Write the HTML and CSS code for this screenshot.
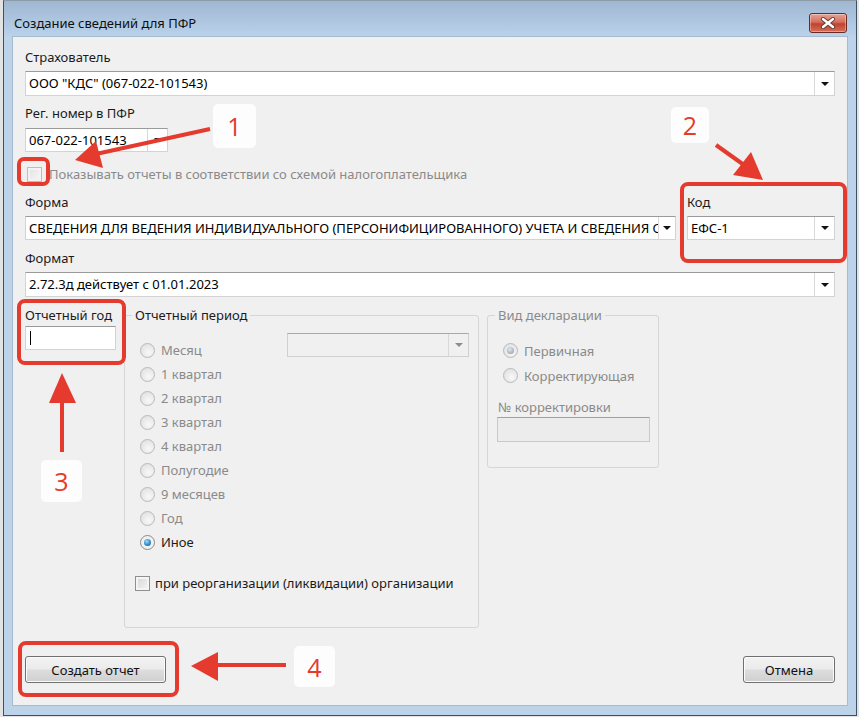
FILE: index.html
```html
<!DOCTYPE html>
<html lang="ru">
<head>
    <meta charset="UTF-8">
    <meta name="viewport" content="width=device-width, initial-scale=1.0">
    <title>Создание сведений для ПФР</title>
    <link rel="stylesheet" href="styles.css">
</head>
<body>

<div class="screen">
    <div class="window">
        <!-- Title bar -->
        <div class="titlebar">
            <span class="title">Создание сведений для ПФР</span>
            <button class="close-btn">
                <svg width="16" height="12" viewBox="0 0 16 12">
                    <path d="M3 2 L13 10 M13 2 L3 10" stroke="#6b3a33" stroke-width="4.2" stroke-linecap="round"/>
                    <path d="M3 2 L13 10 M13 2 L3 10" stroke="#ffffff" stroke-width="2.4" stroke-linecap="round"/>
                </svg>
            </button>
        </div>

        <div class="client">
            <label class="lbl">Страхователь</label>
            <div class="combo combo-insurer">
                <span class="combo-text">ООО "КДС" (067-022-101543)</span>
                <span class="combo-btn"></span>
            </div>

            <label class="lbl lbl-reg">Рег. номер в ПФР</label>
            <div class="combo combo-reg">
                <span class="combo-text">067-022-101543</span>
                <span class="combo-btn"></span>
            </div>

            <div class="check-row check-scheme disabled">
                <span class="checkbox"></span>
                <span>Показывать отчеты в соответствии со схемой налогоплательщика</span>
            </div>

            <div class="form-row">
                <div class="col-form">
                    <label class="lbl">Форма</label>
                    <div class="combo combo-form">
                        <span class="combo-text">СВЕДЕНИЯ ДЛЯ ВЕДЕНИЯ ИНДИВИДУАЛЬНОГО (ПЕРСОНИФИЦИРОВАННОГО) УЧЕТА И СВЕДЕНИЯ О</span>
                        <span class="combo-btn narrow"></span>
                    </div>
                </div>
                <div class="col-code">
                    <label class="lbl">Код</label>
                    <div class="combo combo-form">
                        <span class="combo-text">ЕФС-1</span>
                        <span class="combo-btn"></span>
                    </div>
                </div>
            </div>

            <label class="lbl lbl-format">Формат</label>
            <div class="combo combo-format">
                <span class="combo-text">2.72.3д действует с 01.01.2023</span>
                <span class="combo-btn"></span>
            </div>

            <div class="lower">
                <div class="year">
                    <label class="lbl">Отчетный год</label>
                    <div class="textbox"><span class="caret"></span></div>
                </div>

                <fieldset class="group period">
                    <legend>Отчетный период</legend>
                    <div class="period-top">
                        <div class="radios">
                            <div class="radio-row disabled"><span class="radio"></span>Месяц</div>
                            <div class="radio-row disabled"><span class="radio"></span>1 квартал</div>
                            <div class="radio-row disabled"><span class="radio"></span>2 квартал</div>
                            <div class="radio-row disabled"><span class="radio"></span>3 квартал</div>
                            <div class="radio-row disabled"><span class="radio"></span>4 квартал</div>
                            <div class="radio-row disabled"><span class="radio"></span>Полугодие</div>
                            <div class="radio-row disabled"><span class="radio"></span>9 месяцев</div>
                            <div class="radio-row disabled"><span class="radio"></span>Год</div>
                            <div class="radio-row"><span class="radio checked"></span>Иное</div>
                        </div>
                        <div class="combo combo-month disabled">
                            <span class="combo-text"></span>
                            <span class="combo-btn"></span>
                        </div>
                    </div>
                    <div class="check-row check-reorg">
                        <span class="checkbox enabled"></span>
                        <span>при реорганизации (ликвидации) организации</span>
                    </div>
                </fieldset>

                <fieldset class="group decl disabled">
                    <legend>Вид декларации</legend>
                    <div class="decl-radios">
                        <div class="radio-row"><span class="radio checked-gray"></span>Первичная</div>
                        <div class="radio-row"><span class="radio"></span>Корректирующая</div>
                    </div>
                    <label class="lbl lbl-corr">№ корректировки</label>
                    <div class="textbox textbox-corr"></div>
                </fieldset>
            </div>

            <div class="buttons">
                <button class="btn btn-create">Создать отчет</button>
                <button class="btn btn-cancel">Отмена</button>
            </div>
        </div>
    </div>

    <!-- Annotations over the screenshot -->
    <svg class="marks" width="859" height="717" viewBox="0 0 859 717">
        <g fill="none" stroke="#e53a2e" stroke-width="4">
            <rect x="19" y="159" width="29" height="25" rx="5"/>
            <rect x="682" y="184" width="163" height="77" rx="6"/>
            <rect x="19" y="301" width="105" height="62" rx="6"/>
            <rect x="20" y="643" width="157" height="52" rx="6"/>
            <path d="M210 129 L96 154"/>
            <path d="M716 145 L744 165"/>
            <path d="M62 452 L62 398"/>
            <path d="M286 665 L214 665"/>
        </g>
        <g fill="#e53a2e">
            <polygon points="75,160 96,141 103,168"/>
            <polygon points="763,180 751,152 733,175"/>
            <polygon points="62,373 49,403 76,403"/>
            <polygon points="191,666 218,652 218,681"/>
        </g>
    </svg>
    <div class="badge badge-1">1</div>
    <div class="badge badge-2">2</div>
    <div class="badge badge-3">3</div>
    <div class="badge badge-4">4</div>
</div>

</body>
</html>
```

FILE: styles.css
```css
* {
    box-sizing: border-box;
}

body {
    margin: 0;
    background-color: #e3e3e3;
    font-family: "Noto Sans", "Liberation Sans", sans-serif;
    font-size: 13px;
    color: #1b1b1b;
}

.screen {
    position: relative;
    width: 859px;
    height: 717px;
    padding-left: 3px;
}

/* Window frame */
.window {
    width: 854px;
    height: 716px;
    display: flex;
    flex-direction: column;
    border: 1px solid #3c5163;
    border-top-color: #8d9aa7;
    background-color: #bcd3ea;
    padding: 0 8px 9px 8px;
}

.titlebar {
    margin: 0 -8px;
    height: 35px;
    padding: 8px 9px 0 10px;
    display: flex;
    align-items: center;
    justify-content: space-between;
    background: linear-gradient(#9fb7d1, #bad1ea);
}

.title {
    color: #0f0f0f;
}

.close-btn {
    width: 38px;
    height: 20px;
    padding: 0;
    display: flex;
    align-items: center;
    justify-content: center;
    border: 1px solid #6a2a22;
    border-radius: 3px;
    background: linear-gradient(#e6a497 0%, #d46f5e 45%, #c4412f 55%, #d2705c 100%);
    box-shadow: inset 0 0 0 1px rgba(255, 255, 255, 0.35);
}

.client {
    flex: 1;
    background-color: #f0f0f0;
    border: 1px solid #a6bbd0;
    padding: 12px 12px 0 12px;
    display: flex;
    flex-direction: column;
}

.lbl {
    display: block;
    height: 16px;
    line-height: 16px;
    white-space: nowrap;
}

/* Combo boxes */
.combo {
    display: flex;
    height: 25px;
    background-color: #fff;
    border: 1px solid #d3d3d3;
    border-top-color: #9a9a9a;
    margin-top: 6px;
}

.combo-text {
    flex: 1;
    min-width: 0;
    padding-left: 3px;
    line-height: 23px;
    white-space: nowrap;
    overflow: hidden;
    color: #000;
}

.combo-btn {
    width: 20px;
    border-left: 1px solid #d8d8d8;
    display: flex;
    align-items: center;
    justify-content: center;
}

.combo-btn.narrow {
    width: 17px;
}

.combo-btn::after {
    content: "";
    border-left: 4px solid transparent;
    border-right: 4px solid transparent;
    border-top: 4px solid #111;
}

.combo.disabled {
    background-color: #f0f0f0;
    border-color: #d0d0d0;
    border-top-color: #a8a8a8;
}

.combo.disabled .combo-btn::after {
    border-top-color: #8c8c8c;
}

.lbl-reg {
    margin-top: 9px;
}

.combo-reg {
    width: 143px;
    height: 24px;
    margin-top: 7px;
}

/* Check boxes and radios */
.check-row {
    display: flex;
    align-items: center;
    height: 18px;
    white-space: nowrap;
}

.check-scheme {
    margin-top: 13px;
    margin-left: 2px;
    gap: 7px;
}

.disabled {
    color: #8a8a8a;
}

.checkbox {
    width: 15px;
    height: 15px;
    border: 1px solid #bdbdbd;
    background: linear-gradient(135deg, #e2e2e2, #f7f7f7);
    box-shadow: inset 0 0 0 2px #f3f3f3;
}

.checkbox.enabled {
    border-color: #8e8f8f;
    background: linear-gradient(135deg, #d4d4d4, #f6f6f6);
    box-shadow: inset 0 0 0 2px #f4f4f4;
}

.radio-row {
    display: flex;
    align-items: center;
    gap: 6px;
    height: 24px;
    white-space: nowrap;
}

.radio {
    width: 15px;
    height: 15px;
    border-radius: 50%;
    border: 1px solid #b9b9b9;
    background: radial-gradient(circle at 60% 65%, #f8f8f8 0%, #e4e4e4 70%, #d6d6d6 100%);
    position: relative;
}

.radio.checked {
    border-color: #8a8a8a;
    background: #f1f1f1;
}

.radio.checked::after,
.radio.checked-gray::after {
    content: "";
    position: absolute;
    left: 3px;
    top: 3px;
    width: 7px;
    height: 7px;
    border-radius: 50%;
    background: radial-gradient(circle at 40% 35%, #a6dcf7 0%, #2d8ccc 55%, #1a5d8f 100%);
}

.radio.checked-gray::after {
    background: radial-gradient(circle at 40% 35%, #e4eaf0 0%, #a9b6c1 60%, #8f9ba6 100%);
}

/* Form / code row */
.form-row {
    display: flex;
    gap: 11px;
    margin-top: 11px;
}

.col-form {
    flex: 1;
    min-width: 0;
}

.col-code {
    width: 148px;
}

.combo-form {
    height: 24px;
}

.lbl-format {
    margin-top: 10px;
}

/* Lower part */
.lower {
    display: flex;
    gap: 8px;
    margin-top: 10px;
    align-items: flex-start;
}

.year {
    width: 91px;
}

.textbox {
    height: 24px;
    margin-top: 3px;
    background-color: #fff;
    border: 1px solid #d3d3d3;
    border-top-color: #9a9a9a;
    padding: 4px 0 0 4px;
}

.caret {
    display: block;
    width: 1px;
    height: 14px;
    background-color: #000;
}

.group {
    margin: 0;
    padding: 0;
    min-width: 0;
    border: 1px solid #d6d6d6;
    border-radius: 3px;
}

.group legend {
    margin-left: 7px;
    padding: 0 3px;
    line-height: 16px;
    white-space: nowrap;
}

.period {
    width: 355px;
    height: 321px;
}

.period-top {
    display: flex;
    justify-content: space-between;
    align-items: flex-start;
}

.radios {
    margin: 15px 0 0 15px;
}

.combo-month {
    width: 182px;
    height: 24px;
    margin: 10px 9px 0 0;
}

.check-reorg {
    margin: 20px 0 0 10px;
    gap: 5px;
}

.decl {
    width: 172px;
    height: 161px;
}

.decl-radios {
    margin: 15px 0 0 15px;
}

.decl-radios .radio-row {
    height: 25px;
}

.lbl-corr {
    margin: 11px 0 0 10px;
}

.textbox-corr {
    width: 153px;
    height: 25px;
    margin: 2px 0 0 9px;
    background-color: #ececec;
    border-color: #c9c9c9;
    border-top-color: #a0a0a0;
}

/* Bottom buttons */
.buttons {
    display: flex;
    justify-content: space-between;
    margin-top: 28px;
}

.btn {
    height: 27px;
    border: 1px solid #707070;
    border-radius: 3px;
    background: linear-gradient(#f3f3f3 0%, #ebebeb 48%, #dddddd 52%, #cfcfcf 100%);
    box-shadow: inset 0 0 0 1px #fbfbfb;
    font-family: inherit;
    font-size: 13px;
    color: #111;
    padding: 0;
}

.btn-create {
    width: 141px;
}

.btn-cancel {
    width: 92px;
}

/* Annotations */
.marks {
    position: absolute;
    left: 0;
    top: 0;
    pointer-events: none;
}

.badge {
    position: absolute;
    display: flex;
    align-items: center;
    justify-content: center;
    background-color: #fdfdfd;
    border-radius: 5px;
    color: #e53a2e;
    font-family: "Open Sans", "Noto Sans", sans-serif;
    font-size: 25px;
}

.badge-1 {
    left: 213px;
    top: 104px;
    width: 43px;
    height: 44px;
}

.badge-2 {
    left: 671px;
    top: 107px;
    width: 38px;
    height: 36px;
}

.badge-3 {
    left: 41px;
    top: 460px;
    width: 41px;
    height: 42px;
}

.badge-4 {
    left: 294px;
    top: 646px;
    width: 41px;
    height: 41px;
}
```
